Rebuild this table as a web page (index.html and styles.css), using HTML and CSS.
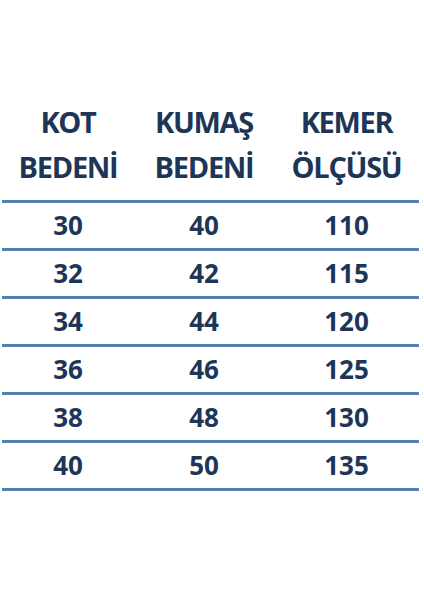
FILE: index.html
```html
<!DOCTYPE html>
<html>
<head>
<meta charset="utf-8">
<link rel="stylesheet" href="styles.css">
</head>
<body>
<div class="page">
  <div class="table">
    <div class="row head">
      <div class="cell c1">KOT<br>BEDENİ</div>
      <div class="cell c2">KUMAŞ<br>BEDENİ</div>
      <div class="cell c3">KEMER<br>ÖLÇÜSÜ</div>
    </div>
    <div class="row"><div class="cell">30</div><div class="cell">40</div><div class="cell">110</div></div>
    <div class="row"><div class="cell">32</div><div class="cell">42</div><div class="cell">115</div></div>
    <div class="row"><div class="cell">34</div><div class="cell">44</div><div class="cell">120</div></div>
    <div class="row"><div class="cell">36</div><div class="cell">46</div><div class="cell">125</div></div>
    <div class="row"><div class="cell">38</div><div class="cell">48</div><div class="cell">130</div></div>
    <div class="row"><div class="cell">40</div><div class="cell">50</div><div class="cell">135</div></div>
  </div>
</div>
</body>
</html>
```
FILE: styles.css
```css
html, body {
  margin: 0;
  padding: 0;
  background: #ffffff;
}
.page {
  width: 424px;
  height: 600px;
  padding-top: 99px;
  box-sizing: border-box;
  font-family: "Open Sans", "Liberation Sans", sans-serif;
  font-weight: 700;
  color: #1d3658;
}
.table {
  margin-left: 2px;
  width: 417px;
}
.row {
  display: grid;
  grid-template-columns: 132px 140px 145px;
  height: 45px;
  border-bottom: 3px solid #5580b5;
  align-items: center;
  text-align: center;
  font-size: 26px;
  line-height: 45px;
}
.row.head {
  height: 101px;
  font-size: 29px;
  line-height: 45px;
  letter-spacing: -1.3px;
  align-items: start;
}
.cell {
  white-space: nowrap;
}
```
